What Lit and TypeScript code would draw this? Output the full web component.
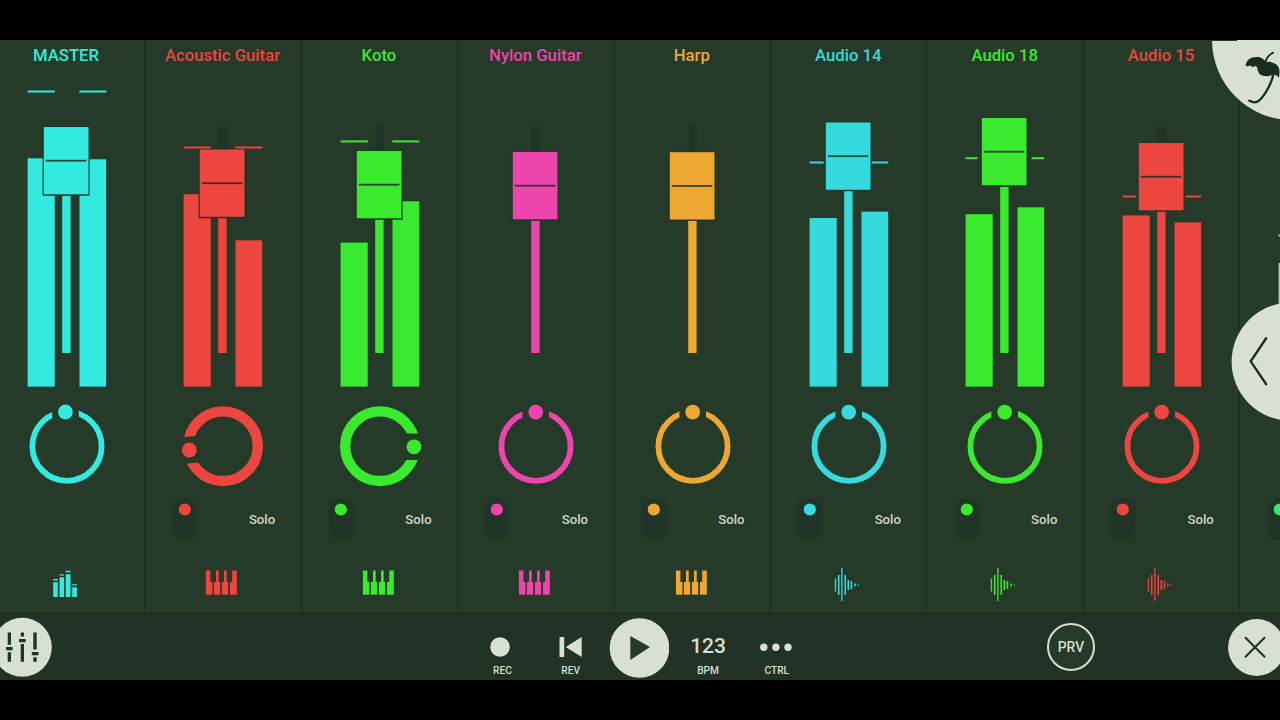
import { LitElement, html, svg, css, nothing } from "lit";
import { customElement, property } from "lit/decorators.js";

type Kind = "mixer" | "keys" | "wave" | "none";

interface Track {
  name: string;
  color: string;
  kind: Kind;
  /** y of the fader's top edge inside the meter canvas */
  fader: number;
  /** tops of the left and right level bars */
  levels?: [number, number];
  /** peak marks: y, left width, right start, right width */
  peak?: [number, number, number, number];
  /** pan dot position relative to the ring centre */
  pan: [number, number];
  meterColor?: string;
  thick?: boolean;
  plain?: boolean;
}

const TOP: [number, number] = [-0.3, -34.1];

const TRACKS: Track[] = [
  { name: "MASTER", color: "#33eae0", kind: "mixer", fader: 47, levels: [78.3, 79.3], peak: [11.5, 27.2, 91.3, 27], pan: [-1.6, -34.2], plain: true },
  { name: "Acoustic Guitar", color: "#ed453f", kind: "keys", fader: 69.5, levels: [114.2, 160.3], peak: [67.5, 27.2, 91.3, 27], pan: [-33.7, 3.8], thick: true },
  { name: "Koto", color: "#3aea2e", kind: "keys", fader: 71, levels: [162.6, 121.3], peak: [61.4, 27.2, 91.3, 27], pan: [34, 0.6], thick: true },
  { name: "Nylon Guitar", color: "#ed44ae", kind: "keys", fader: 72, pan: TOP },
  { name: "Harp", color: "#eda833", kind: "keys", fader: 72.2, pan: TOP },
  { name: "Audio 14", color: "#34dade", kind: "wave", fader: 42.5, levels: [138, 131.6], peak: [82.5, 14, 102, 16.3], pan: TOP },
  { name: "Audio 18", color: "#3aea2e", kind: "wave", fader: 38, levels: [134.2, 127.3], peak: [78.2, 12, 105.5, 12.8], pan: TOP },
  { name: "Audio 15", color: "#ed453f", kind: "wave", fader: 63, levels: [135.4, 142.4], peak: [116.5, 13.5, 102.5, 15.8], pan: TOP },
  { name: "", color: "#3ae968", meterColor: "#b4cdb8", kind: "none", fader: 63, levels: [183, 183], peak: [155.5, 27.2, 91.3, 27], pan: TOP },
];

@customElement("mixer-strip")
class MixerStrip extends LitElement {
  @property({ attribute: false }) track!: Track;

  static styles = css`
    :host {
      display: flex;
      flex-direction: column;
      flex: none;
      width: 156.45px;
      height: 573px;
      box-sizing: border-box;
    }
    svg { display: block; flex: none; }
    .name {
      height: 31px;
      line-height: 31px;
      text-align: center;
      font-size: 16.7px;
      font-weight: 500;
      white-space: nowrap;
    }
    .meter { margin-top: 9px; }
    .controls {
      display: flex;
      justify-content: space-between;
      align-items: center;
      height: 50px;
      padding: 0 25.5px 0 26.3px;
      font-size: 13.2px;
      font-weight: 500;
      color: #ccd6c9;
    }
    .controls span { padding-bottom: 1px; }
    .icon { margin: 25px 0 0 59px; }
    .empty { visibility: hidden; }
  `;

  private meter(t: Track) {
    const f = t.fader;
    const c = t.meterColor ?? t.color;
    return svg`
      <rect x="74.5" y="46" width="8.5" height=${Math.max(0, f - 46)} rx="2" fill="#203327"></rect>
      <rect x="74.2" y=${f + 68.5} width="8.4" height=${273 - f - 68.5} fill=${c}></rect>
      ${t.levels ? svg`
        <rect x="39.6" y=${t.levels[0]} width="27.1" height=${306.6 - t.levels[0]} fill=${c}></rect>
        <rect x="91.5" y=${t.levels[1]} width="26.7" height=${306.6 - t.levels[1]} fill=${c}></rect>` : nothing}
      ${t.peak ? svg`
        <rect x="39.6" y=${t.peak[0] - 1} width=${t.peak[1]} height="2" fill=${c}></rect>
        <rect x=${t.peak[2]} y=${t.peak[0] - 1} width=${t.peak[3]} height="2" fill=${c}></rect>` : nothing}
      <rect x="54.6" y=${f - 0.7} width="47" height="69.4" fill="#1e3828"></rect>
      <rect x="55.8" y=${f} width="44.7" height="67.3" fill=${t.color}></rect>
      <rect x="57.8" y=${f + 32.8} width="40.6" height="1.8" fill="#1c2b22" opacity="0.85"></rect>
    `;
  }

  private knob(t: Track) {
    const [dx, dy] = t.pan;
    const k = 45 / Math.hypot(dx, dy);
    return svg`
      <circle cx="79" cy="48.2" r=${t.thick ? 34.8 : 34.6} fill="none" stroke=${t.color} stroke-width=${t.thick ? 10.4 : 5.8}></circle>
      <line x1="79" y1="48.2" x2=${79 + dx * k} y2=${48.2 + dy * k} stroke="#253a29" stroke-width="26.6"></line>
      <circle cx=${79 + dx} cy=${48.2 + dy} r="7.4" fill=${t.color}></circle>
    `;
  }

  private icon(kind: Kind) {
    if (kind === "mixer")
      return svg`<path d="M6.2 12.3h4.6v14.6H6.2zM12.5 7.3h4.6v19.6h-4.6zM18.7 4.2h4.8v22.7h-4.8zM25.2 17.3h4.7v9.6h-4.7zM6.2 9h4.6v1.5H6.2zM12.5 4.300h4.600v1.300h-4.600zM18.700.700h4.800v1.500h-4.800zM25.200 14.200h4.700v1.300h-4.700z"></path>`;
    if (kind === "keys")
      return svg`<path d="M2.9.6h4.500v11.400h2.100v12.800H2.900zM13 .6h2.700v11.400h1.500v12.800h-6.300V12h2.100zM21 .6h2.700v11.400h1.500v12.800h-6.300V12h2.100zM29.200.6h4.600v24.200h-6.800V12h2.200z"></path>`;
    if (kind === "wave")
      return svg`<path transform="translate(.5 -.6)" d="M5.300 9h1.300v13H5.300zM8.400 5.500H10v20H8.400zM11.700-1.500h1.300v33h-1.300zM15 5.500h1.500v20H15zM18 10.500h1.700v10H18zM21.200 11.500h1.500v8h-1.500zM24.700 14h1.500v3h-1.500zM28 14.800h1.300v1.400H28z"></path>`;
    return nothing;
  }

  render() {
    const t = this.track;
    return html`
      <div class="name" style="color:${t.color}">${t.name}</div>
      <svg class="meter" width="156.45" height="318" viewBox="0 0 156.45 318">${this.meter(t)}</svg>
      <svg width="156.45" height="97" viewBox="0 0 156.45 97">${this.knob(t)}</svg>
      <div class="controls ${t.plain ? "empty" : ""}">
        <svg width="28" height="46" viewBox="0 0 28 46">
          <rect x="1.5" y="1.5" width="25" height="42" rx="9" fill="#203427"></rect>
          <circle cx="13.8" cy="12.500" r="6.100" fill=${t.color}></circle>
        </svg>
        ${t.name && !t.plain ? html`<span>Solo</span>` : nothing}
      </div>
      <svg class="icon" width="36" height="32" viewBox="0 0 36 32" overflow="visible" fill=${t.color}>${this.icon(t.kind)}</svg>
    `;
  }
}

@customElement("app-root")
class AppRoot extends LitElement {
  static styles = css`
    :host {
      display: flex;
      flex-direction: column;
      position: relative;
      width: 1280px;
      height: 720px;
      box-sizing: border-box;
      padding: 40px 0;
      overflow: hidden;
      background: #000;
      font-family: Roboto, sans-serif;
      color: #d8dfd3;
    }
    svg { display: block; }
    .strips {
      display: flex;
      height: 573px;
      overflow: hidden;
      background: #253a29;
      box-sizing: border-box;
    }
    .strips mixer-strip:first-child { margin-left: -12.2px; }
    .strips mixer-strip + mixer-strip { background: linear-gradient(90deg, #1a2b1f 1px, transparent 1px); }
    .bar {
      display: grid;
      grid-template-columns: 52px 415.200px repeat(5, 68.700px) 236.300px 48px 129.500px 56px;
      height: 67px;
      box-sizing: border-box;
      border-top: 1px solid #18271c;
      background: #213326;
      overflow: hidden;
    }
    .round { display: flex; align-items: center; justify-content: flex-end; }
    .close { justify-content: flex-start; }
    .cell {
      display: flex;
      flex-direction: column;
      align-items: center;
      font-size: 10.2px;
      font-weight: 500;
    }
    .face {
      display: flex;
      align-items: center;
      justify-content: center;
      height: 40px;
      padding-top: 13px;
      margin-bottom: -2px;
    }
    .bpm {
      height: 38px;
      padding-bottom: 2px;
      padding-left: 1px;
      font-size: 21px;
    }
    .label { line-height: 12px; padding-left: 1px; }
    .play { padding-top: 3.5px; }
    .rec .face { padding-right: 3px; }
    .rec .label { padding-left: 2px; }
    .prv {
      align-self: center;
      display: flex;
      align-items: center;
      justify-content: center;
      width: 48px;
      height: 48px;
      box-sizing: border-box;
      border: 2px solid #d8dfd3;
      border-radius: 50%;
      background: #253a29;
      font-size: 13.800px;
      font-weight: 500;
    }
    .logo { position: absolute; right: 0; top: 40px; }
    .drawer { position: absolute; right: 0; top: 300px; }
  `;

  render() {
    const light = "#d8dfd3";
    return html`
      <div class="strips">${TRACKS.map((t) => html`<mixer-strip .track=${t}></mixer-strip>`)}</div>
      <div class="bar">
        <div class="round">
          <svg width="52" height="66" viewBox="0 0 52 66">
            <circle cx="22.300" cy="33.300" r="29.500" fill=${light}></circle>
            <path fill="#203327" d="M7.700 18.500h3.300v12.200H7.700zM6 33h6.600v3.300H6zM7.700 38.200h3.300v9.500H7.700zM20.700 18.500h3.300v4h-3.300zM19 25h6.700v3.300H19zM20.700 30h3.300v17.700h-3.300zM33.300 18.500h3.400v17h-3.400zM31.800 38h6.700v3.200h-6.700zM33.300 43.200h3.400v4.500h-3.400z"></path>
          </svg>
        </div>
        <span></span>
        <div class="cell rec">
          <div class="face"><svg width="20" height="20" viewBox="0 0 20 20"><circle cx="10" cy="10" r="9.800" fill=${light}></circle></svg></div>
          <span class="label">REC</span>
        </div>
        <div class="cell">
          <div class="face"><svg width="23" height="20" viewBox="0 0 23 20" fill=${light}><path d="M.5 0h4.700v20H.5zM22.700 0v20L6.700 10z"></path></svg></div>
          <span class="label">REV</span>
        </div>
        <div class="cell play">
          <svg width="60" height="60" viewBox="0 0 60 60">
            <circle cx="30.500" cy="30" r="29.800" fill=${light}></circle>
            <path d="M21.300 18v24L41 29z" fill="#253a29"></path>
          </svg>
        </div>
        <div class="cell">
          <div class="face bpm">123</div>
          <span class="label">BPM</span>
        </div>
        <div class="cell">
          <div class="face">
            <svg width="32" height="8" viewBox="0 0 32 8" fill=${light}><circle cx="3.800" cy="4.300" r="3.700"></circle><circle cx="15.900" cy="4.300" r="3.700"></circle><circle cx="28" cy="4.300" r="3.700"></circle></svg>
          </div>
          <span class="label">CTRL</span>
        </div>
        <span></span>
        <div class="prv">PRV</div>
        <span></span>
        <div class="round close">
          <svg width="56" height="66" viewBox="0 0 56 66">
            <circle cx="32.500" cy="33.500" r="28.400" fill=${light}></circle>
            <path d="M21 23.300l20 20M41 23.300l-20 20" stroke="#1f3024" stroke-width="2"></path>
          </svg>
        </div>
      </div>
      <svg class="logo" width="70" height="82" viewBox="1210 40 70 82">
        <circle cx="1292" cy="40" r="80" fill=${light}></circle>
        <rect x="1212" y="40" width="25" height="1" fill="#253a29"></rect>
        <g transform="translate(1190 30) scale(.33333)" fill="#1b2b22">
          <path d="M167 107C168 91 182 81 200 81C213 80 222 88 229 97C240 93 254 98 263 107C270 116 270 130 266 143C261 137 256 134 250 133C243 137 235 140 226 138C213 138 203 131 202 113C198 109 193 107 188 112C185 107 180 106 176 108C172 110 169 109 167 107z"></path>
          <path d="M226 98C229 83 238 73 251 67" fill="none" stroke="#1b2b22" stroke-width="5.500"></path>
          <path d="M250 131C247 156 224 198 207 212C199 219 187 217 178 212" fill="none" stroke="#1b2b22" stroke-width="7" stroke-linecap="round"></path>
        </g>
      </svg>
      <svg class="drawer" width="50" height="124" viewBox="1230 300 50 124">
        <circle cx="1290.700" cy="361.700" r="59.100" fill=${light}></circle>
        <path d="M1266.700 337.500L1250.700 361.300L1266.700 385" fill="none" stroke="#1b2b22" stroke-width="2.300"></path>
      </svg>
    `;
  }
}
